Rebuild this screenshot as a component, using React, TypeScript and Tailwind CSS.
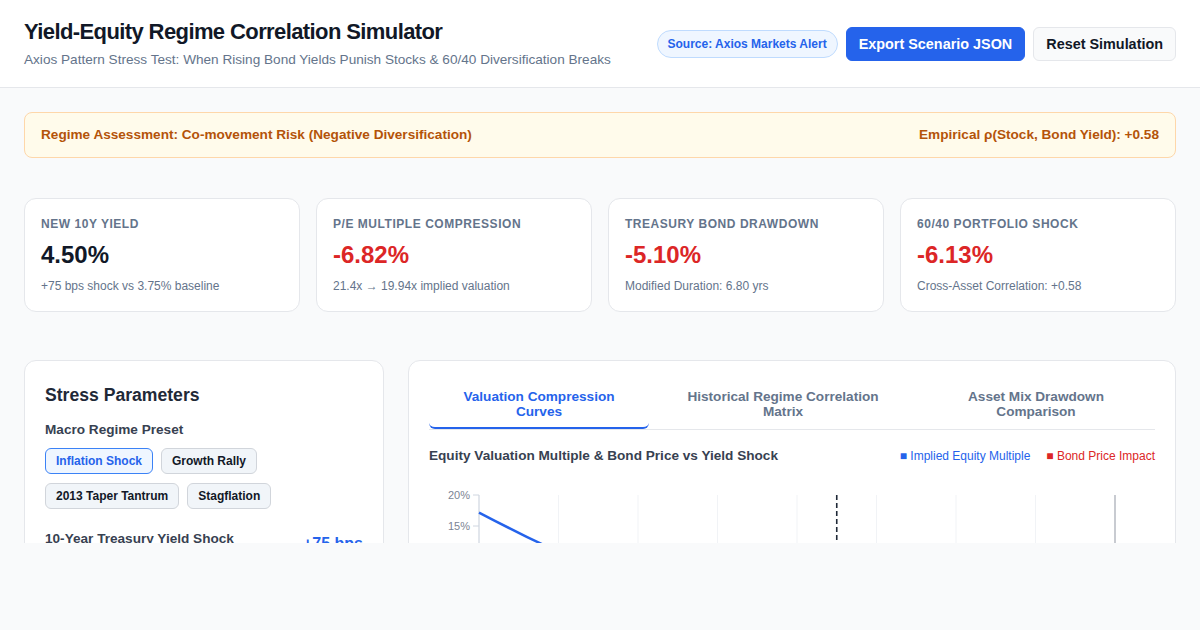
import { useState } from 'react'

const presets = ['Inflation Shock', 'Growth Rally', '2013 Taper Tantrum', 'Stagflation']

const tabs = [
  { label: 'Valuation Compression Curves', w: 'w-[220px]' },
  { label: 'Historical Regime Correlation Matrix', w: 'w-[244px]' },
  { label: 'Asset Mix Drawdown Comparison', w: 'w-[238px]' },
]

const metrics = [
  { label: 'New 10Y Yield', value: '4.50%', tone: 'text-[#111827]', sub: '+75 bps shock vs 3.75% baseline' },
  { label: 'P/E Multiple Compression', value: '-6.82%', tone: 'text-[#dc2626]', sub: '21.4x → 19.94x implied valuation' },
  { label: 'Treasury Bond Drawdown', value: '-5.10%', tone: 'text-[#dc2626]', sub: 'Modified Duration: 6.80 yrs' },
  { label: '60/40 Portfolio Shock', value: '-6.13%', tone: 'text-[#dc2626]', sub: 'Cross-Asset Correlation: +0.58' },
]

// chart geometry
const W = 726
const H = 280
const left = 50
const plotW = 636
const top = 20
const pxPerPct = 6.2
const xOf = (bps: number) => left + ((bps + 150) / 400) * plotW
const yOf = (pct: number) => top + (20 - pct) * pxPerPct

function Chart({ shock }: { shock: number }) {
  const ey = (1 / 21.4) * 100
  const pts: number[] = []
  for (let b = -150; b <= 250; b += 10) pts.push(b)
  const equity = pts.map((b) => `${xOf(b)},${yOf((ey / (ey + (0.456 * b) / 100) - 1) * 100)}`).join(' ')
  const bond = pts.map((b) => `${xOf(b)},${yOf((-6.8 * b) / 100)}`).join(' ')
  const ticks = [20, 15, 10, 5, 0, -5, -10, -15, -20]

  return (
    <svg width={W} height={H} className="mt-[11px] block">
      {[1, 2, 3, 4, 5, 6, 7].map((i) => (
        <line key={i} x1={left + i * 79.5} x2={left + i * 79.5} y1={top} y2={top + 248} stroke="#f1f3f6" strokeWidth="1" />
      ))}
      <line x1={left + plotW} x2={left + plotW} y1={top} y2={top + 248} stroke="#a3a8b3" strokeWidth="1.2" />
      <line x1={left} x2={left} y1={top} y2={top + 248} stroke="#cfd6e0" strokeWidth="1.2" />
      {ticks.map((t) => (
        <g key={t}>
          <line x1={left - 6} x2={left} y1={yOf(t)} y2={yOf(t)} stroke="#cfd6e0" />
          <text x={left - 9} y={yOf(t) + 4} textAnchor="end" fontSize="11" fill="#7b8494">
            {t}%
          </text>
        </g>
      ))}
      <line x1={left} x2={left + plotW} y1={yOf(0)} y2={yOf(0)} stroke="#cfd6e0" />
      <line x1={xOf(shock)} x2={xOf(shock)} y1={top} y2={top + 248} stroke="#1f2937" strokeWidth="1.6" strokeDasharray="5 3" />
      <polyline points={equity} fill="none" stroke="#2563eb" strokeWidth="2.5" />
      <polyline points={bond} fill="none" stroke="#dc2626" strokeWidth="2.5" />
    </svg>
  )
}

export default function App() {
  const [preset, setPreset] = useState('Inflation Shock')
  const [tab, setTab] = useState(0)
  const [shock, setShock] = useState(75)

  return (
    <div className="h-[630px] overflow-hidden bg-[#f9fafb] font-['Liberation_Sans',Arial,sans-serif]">
      <div className="h-[543px] overflow-hidden">
        {/* Header */}
        <header className="flex items-center justify-between border-b border-[#e5e7eb] bg-white px-6 pt-[18px] pb-[17px]">
          <div>
            <h1 className="text-[22px] font-bold leading-7 tracking-[-0.6px] text-[#111827]">
              Yield-Equity Regime Correlation Simulator
            </h1>
            <p className="mt-1 text-[13.6px] leading-5 text-[#64748b]">
              Axios Pattern Stress Test: When Rising Bond Yields Punish Stocks &amp; 60/40 Diversification Breaks
            </p>
          </div>
          <div className="flex items-center gap-2">
            <span className="rounded-full border border-[#bfdbfe] bg-[#eff6ff] px-2.5 py-[5px] text-xs font-semibold leading-4 text-[#2563eb]">
              Source: Axios Markets Alert
            </span>
            <button className="rounded-md border border-[#2563eb] bg-[#2563eb] px-3 py-1.5 text-[14.4px] font-semibold leading-5 text-white">
              Export Scenario JSON
            </button>
            <button
              onClick={() => {
                setPreset('Inflation Shock')
                setShock(75)
              }}
              className="rounded-md border border-[#e5e7eb] bg-[#f9fafb] px-3 py-1.5 text-[14.4px] font-semibold leading-5 text-[#111827]"
            >
              Reset Simulation
            </button>
          </div>
        </header>

        <main className="px-6 pt-6">
          {/* Regime banner */}
          <div className="flex items-center justify-between rounded-lg border border-[#fed7aa] bg-[#fffbeb] px-4 py-3 text-[13.6px] font-semibold leading-5 text-[#b45309]">
            <span>Regime Assessment: Co-movement Risk (Negative Diversification)</span>
            <span>Empirical ρ(Stock, Bond Yield): +0.58</span>
          </div>

          {/* Metric cards */}
          <div className="mt-10 grid grid-cols-4 gap-4">
            {metrics.map((m) => (
              <div key={m.label} className="rounded-xl border border-[#e5e7eb] bg-white px-4 pt-4 pb-[17px]">
                <div className="text-xs font-semibold uppercase leading-[18px] tracking-[0.045em] text-[#64748b]">{m.label}</div>
                <div className={`mt-1.5 text-2xl font-bold leading-8 ${m.tone}`}>{m.value}</div>
                <div className="mt-[7px] text-xs leading-4 text-[#64748b]">{m.sub}</div>
              </div>
            ))}
          </div>

          {/* Lower panels */}
          <div className="mt-12 flex gap-6">
            <section className="w-[360px] shrink-0 rounded-xl border border-[#e5e7eb] bg-white p-5">
              <h2 className="text-[17.6px] font-bold leading-7 text-[#1f2937]">Stress Parameters</h2>
              <div className="mt-[11px] text-[13.6px] font-semibold leading-5 text-[#374151]">Macro Regime Preset</div>
              <div className="mt-2 flex flex-wrap gap-x-2 gap-y-[9px]">
                {presets.map((p) => (
                  <button
                    key={p}
                    onClick={() => setPreset(p)}
                    className={`rounded-md border px-2.5 py-1 text-xs font-semibold leading-4 ${
                      preset === p
                        ? 'border-[#3b82f6] bg-[#eff6ff] text-[#2563eb]'
                        : 'border-[#d1d5db] bg-[#f1f5f9] text-[#111827]'
                    }`}
                  >
                    {p}
                  </button>
                ))}
              </div>
              <div className="mt-5 flex items-start justify-between">
                <div>
                  <div className="text-[13.6px] font-semibold leading-5 text-[#374151]">10-Year Treasury Yield Shock</div>
                  <div className="text-xs leading-4 text-[#64748b]">Parallel shift vs 3.75% baseline</div>
                </div>
                <span className="mt-[3px] text-base font-bold leading-6 text-[#2563eb]">+{shock} bps</span>
              </div>
              <input
                type="range"
                min={-150}
                max={250}
                value={shock}
                onChange={(e) => setShock(Number(e.target.value))}
                className="mt-3 w-full accent-[#2563eb]"
              />
            </section>

            <section className="flex-1 rounded-xl border border-[#e5e7eb] bg-white p-5">
              <div className="flex gap-3 border-b border-[#e5e7eb]">
                {tabs.map((t, i) => (
                  <button
                    key={t.label}
                    onClick={() => setTab(i)}
                    className={`${t.w} rounded-md border-b-2 px-6 py-2 text-[13.6px] font-bold leading-[15px] ${
                      tab === i ? 'border-[#2563eb] text-[#2563eb]' : 'border-transparent text-[#64748b]'
                    }`}
                  >
                    {t.label}
                  </button>
                ))}
              </div>
              <div className="mt-[18px] flex items-center justify-between">
                <h3 className="text-[13.6px] font-bold leading-4 text-[#374151]">
                  Equity Valuation Multiple &amp; Bond Price vs Yield Shock
                </h3>
                <div className="flex gap-4 text-xs leading-4">
                  <span className="text-[#2563eb]">■ Implied Equity Multiple</span>
                  <span className="text-[#dc2626]">■ Bond Price Impact</span>
                </div>
              </div>
              <Chart shock={shock} />
            </section>
          </div>
        </main>
      </div>
    </div>
  )
}
